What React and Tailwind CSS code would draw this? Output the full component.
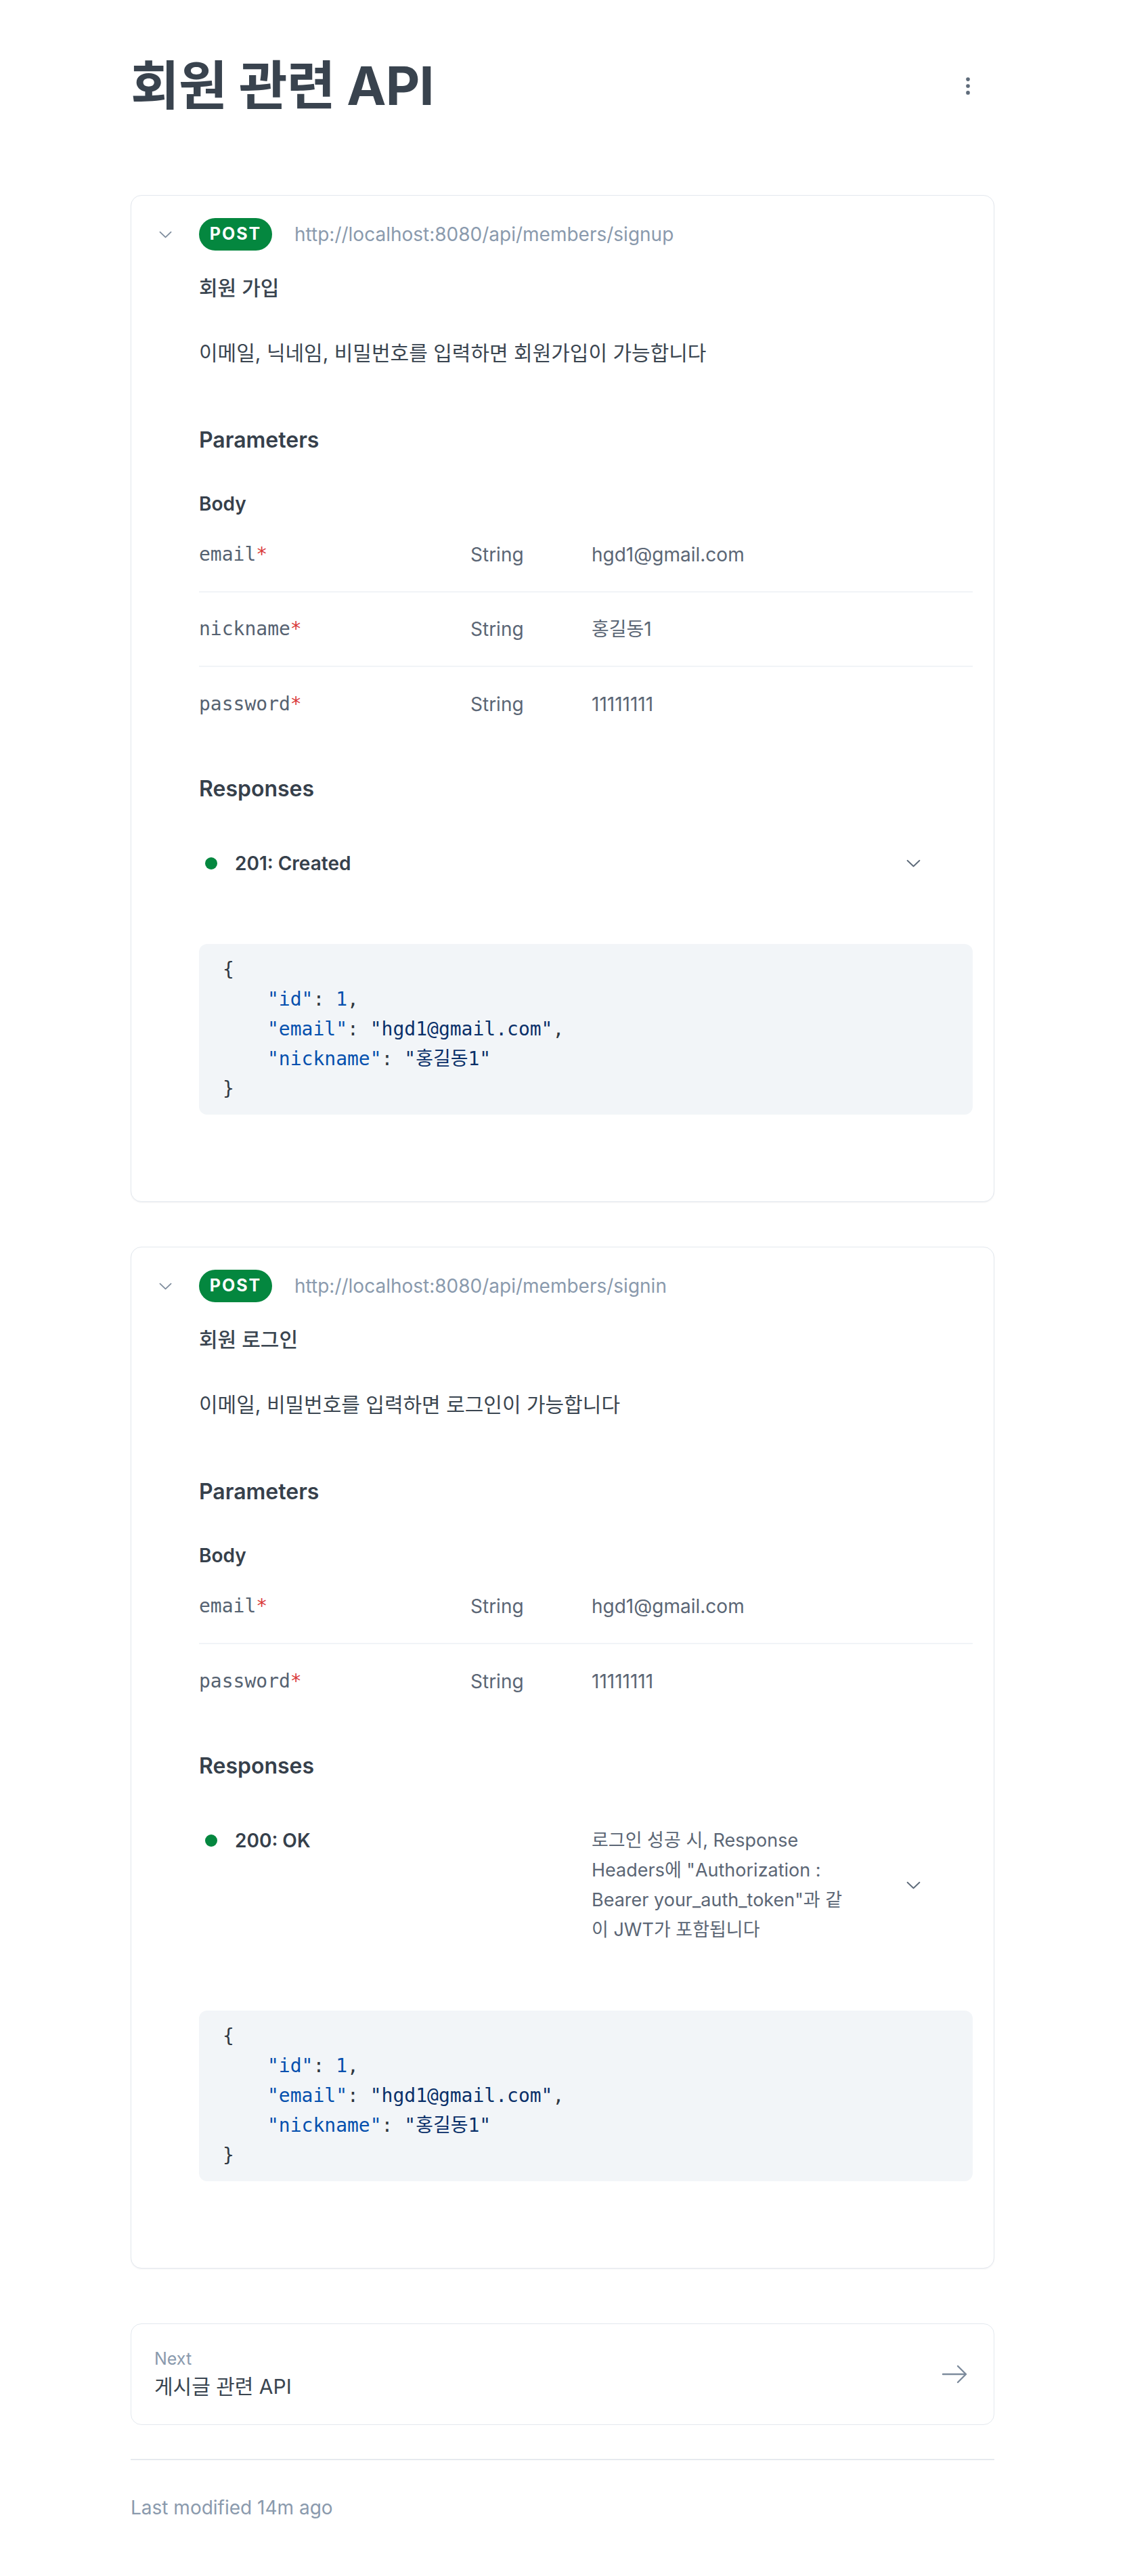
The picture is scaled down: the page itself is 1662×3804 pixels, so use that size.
import React from 'react'
import { EllipsisVertical } from 'lucide-react'

const sans = "font-['Inter','Noto_Sans_CJK_KR',sans-serif]"
const mono = "font-['DejaVu_Sans_Mono','Noto_Sans_CJK_KR',monospace]"

// API 문서 데이터
const endpoints = [
    {
        url: 'http://localhost:8080/api/members/signup',
        title: '회원 가입',
        desc: '이메일, 닉네임, 비밀번호를 입력하면 회원가입이 가능합니다',
        params: [
            ['email', 'hgd1@gmail.com'],
            ['nickname', '홍길동1'],
            ['password', '11111111'],
        ],
        status: '201: Created',
        statusDesc: null,
    },
    {
        url: 'http://localhost:8080/api/members/signin',
        title: '회원 로그인',
        desc: '이메일, 비밀번호를 입력하면 로그인이 가능합니다',
        params: [
            ['email', 'hgd1@gmail.com'],
            ['password', '11111111'],
        ],
        status: '200: OK',
        statusDesc: [
            '로그인 성공 시, Response',
            'Headers에 "Authorization :',
            'Bearer your_auth_token"과 같',
            '이 JWT가 포함됩니다',
        ],
    },
]

const Chevron = ({ className }) => (
    <svg className={className} viewBox="0 0 20 11" fill="none" stroke="currentColor" strokeWidth={1.8} strokeLinecap="round" strokeLinejoin="round">
        <path d="M1.5 1.5l8.5 8 8.5-8" />
    </svg>
)

const CodeBlock = () => (
    <div className={`mt-[75px] rounded-xl bg-[#f2f5f8] py-4 pl-[35px] text-[28px] leading-[44px] text-[#2f3740] ${mono}`}>
        <div>{'{'}</div>
        <div className="pl-[66px]">
            <span className="text-[#0550ae]">"id"</span>: <span className="text-[#0550ae]">1</span>,
        </div>
        <div className="pl-[66px]">
            <span className="text-[#0550ae]">"email"</span>: <span className="text-[#0a3069]">"hgd1@gmail.com"</span>,
        </div>
        <div className="pl-[66px]">
            <span className="text-[#0550ae]">"nickname"</span>: <span className="text-[#0a3069]">"홍길동1"</span>
        </div>
        <div>{'}'}</div>
    </div>
)

const EndpointCard = ({ api, className }) => (
    <div className={`rounded-2xl border border-[#e3e8ee] bg-white pl-[41px] pr-[31px] pt-[33px] pb-[128px] shadow-[0_1px_2px_rgba(15,23,42,0.06)] ${className}`}>
        {/* 헤더 */}
        <div className="flex h-12 items-center">
            <div className="w-[59px] shrink-0">
                <Chevron className="w-[19px] h-[11px] text-[#7d8b9c]" />
            </div>
            <span className="flex h-12 w-[108px] items-center justify-center rounded-full bg-[#04873f] text-[25px] font-bold tracking-[0.08em] text-white">
                POST
            </span>
            <span className="ml-[33px] text-[28px] text-[#8a9aad]">{api.url}</span>
        </div>

        <div className="pl-[59px]">
            <div className="mt-[34px] text-[30px] leading-[42px] font-medium text-[#3a4550]">{api.title}</div>
            <div className="mt-[54px] text-[30px] leading-[42px] text-[#3a4550]">{api.desc}</div>

            {/* 파라미터 */}
            <div className="mt-[88px] text-[32px] leading-[40px] font-semibold text-[#36404b]">Parameters</div>
            <div className="mt-[53px] text-[28px] leading-[42px] font-semibold text-[#36404b]">Body</div>
            <div>
                {api.params.map(([name, value], idx) => (
                    <div key={idx} className="flex h-[110px] items-center border-b-2 border-[#f1f4f7] last:border-b-0">
                        <span className={`w-[401px] text-[28px] text-[#566271] ${mono}`}>
                            {name}<span className="text-[#d93a3a]">*</span>
                        </span>
                        <span className="w-[179px] text-[28px] text-[#5b6675]">String</span>
                        <span className="text-[28px] text-[#5b6675]">{value}</span>
                    </div>
                ))}
            </div>

            {/* 응답 */}
            <div className="mt-[50px] text-[32px] leading-[40px] font-semibold text-[#36404b]">Responses</div>
            <div className="mt-[46px] flex py-[22px]">
                <div className="flex w-[580px] shrink-0 items-start">
                    <span className="ml-[9px] mt-[13px] h-[18px] w-[18px] rounded-full bg-[#04873f]" />
                    <span className="ml-[26px] text-[28px] leading-[44px] font-semibold text-[#36404b]">{api.status}</span>
                </div>
                {api.statusDesc && (
                    <div className="w-[420px] text-[27px] leading-[44px] text-[#5b6675]">
                        {api.statusDesc.map((line, i) => (
                            <div key={i}>{line}</div>
                        ))}
                    </div>
                )}
                <div className="ml-auto mr-[77px] self-center">
                    <Chevron className="w-[21px] h-[12px] text-[#5e6b7a]" />
                </div>
            </div>

            <CodeBlock />
        </div>
    </div>
)

export default function App() {
    return (
        <div className={`min-h-screen bg-white ${sans}`}>
            <div className="mx-auto w-[1276px] pt-[81px] pb-[85px]">
                <div className="flex items-center justify-between">
                    <h1 className="text-[78px] leading-[91px] font-bold tracking-[-0.01em] text-[#39434e]">회원 관련 API</h1>
                    <EllipsisVertical size={34} strokeWidth={2} className="mr-[22px] text-[#5e6b7a]" />
                </div>

                <EndpointCard api={endpoints[0]} className="mt-[116px]" />
                <EndpointCard api={endpoints[1]} className="mt-[66px]" />

                {/* 다음 페이지 */}
                <div className="mt-[81px] flex h-[150px] items-center justify-between rounded-2xl border border-[#e3e8ee] pl-[34px] pr-[39px]">
                    <div>
                        <div className="text-[25px] leading-[32px] text-[#8a9aad]">Next</div>
                        <div className="mt-1 text-[30px] leading-[42px] text-[#3a4550]">게시글 관련 API</div>
                    </div>
                    <svg className="w-[38px] h-[28px] text-[#7d8b9c]" viewBox="0 0 38 28" fill="none" stroke="currentColor" strokeWidth={2.4} strokeLinecap="round" strokeLinejoin="round">
                        <path d="M2 14h34M24 2l12 12-12 12" />
                    </svg>
                </div>

                <div className="mt-[50px] border-t-2 border-[#e6eaef]" />
                <div className="mt-[54px] text-[28px] leading-[32px] text-[#8a9aad]">Last modified 14m ago</div>
            </div>
        </div>
    )
}
